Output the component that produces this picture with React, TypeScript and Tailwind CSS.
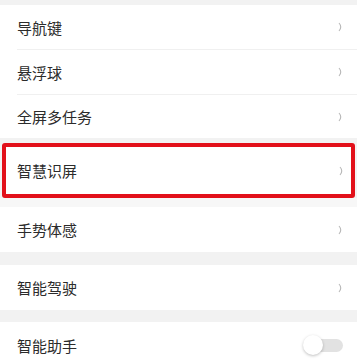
import React from "react";

const font = { fontFamily: '"Noto Sans CJK SC", "Noto Sans", sans-serif' };

const Chevron = () => (
  <svg width="6" height="10" viewBox="0 0 6 10" className="shrink-0">
    <path d="M1 1 Q4.5 5 1 9" fill="none" stroke="#b8b8b8" strokeWidth="1.1" />
  </svg>
);

const Row = ({ label, h = "h-[44px]", right }: { label: string; h?: string; right?: React.ReactNode }) => (
  <div className={`flex items-center justify-between bg-white pl-[17px] pr-[13px] ${h}`}>
    <span className="text-[15px] text-[#2b2b2b] leading-none">{label}</span>
    {right ?? <Chevron />}
  </div>
);

const Divider = () => (
  <div className="bg-white pl-[17px]">
    <div className="h-px bg-[#f0f0f0]" />
  </div>
);

const Toggle = () => (
  <div className="relative w-[42px] h-[20px] flex items-center mr-[-1px]">
    <div className="ml-[6px] h-[13px] w-[34px] rounded-full bg-[#e2e2e2]" />
    <div className="absolute left-0 top-0 h-[20px] w-[20px] rounded-full bg-white shadow-[0_1px_3px_rgba(0,0,0,0.25)]" />
  </div>
);

export default function App() {
  return (
    <div className="w-[357px] h-[360px] overflow-hidden bg-[#f2f2f2]" style={font}>
      <div className="h-[5px]" />
      <Row label="导航键" />
      <Divider />
      <Row label="悬浮球" />
      <Divider />
      <Row label="全屏多任务" h="h-[43px]" />
      <div className="h-[5px]" />
      <div className="mx-[2px] rounded-[3px] border-4 border-[#e2101a] bg-white">
        <div className="flex items-center justify-between h-[47px] pl-[11px] pr-[6px]">
          <span className="text-[15px] text-[#2b2b2b] leading-none">智慧识屏</span>
          <Chevron />
        </div>
      </div>
      <div className="h-[9px] bg-[#f7f7f7]" />
      <Row label="手势体感" h="h-[45px]" />
      <div className="h-[13px]" />
      <Row label="智能驾驶" h="h-[45px]" />
      <div className="h-[12px]" />
      <Row label="智能助手" h="h-[46px]" right={<Toggle />} />
    </div>
  );
}
